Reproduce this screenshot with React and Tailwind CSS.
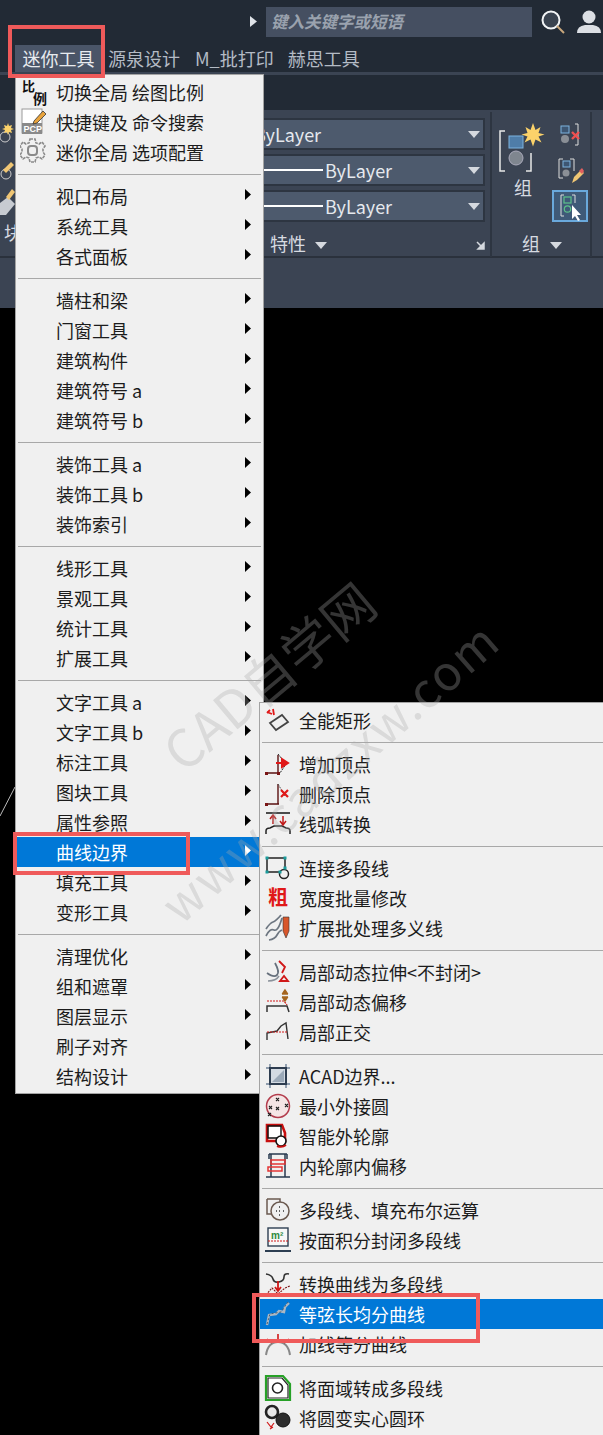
const font = { fontFamily: '"Noto Sans CJK SC", "Noto Sans", sans-serif' }

// one group of rows per block between the separators
const mainMenu = [
    [
        { label: '切换全局 绘图比例', icon: 'scale' },
        { label: '快捷键及 命令搜索', icon: 'pcp' },
        { label: '迷你全局 选项配置', icon: 'gear' },
    ],
    [{ label: '视口布局', sub: true }, { label: '系统工具', sub: true }, { label: '各式面板', sub: true }],
    [
        { label: '墙柱和梁', sub: true },
        { label: '门窗工具', sub: true },
        { label: '建筑构件', sub: true },
        { label: '建筑符号 a', sub: true },
        { label: '建筑符号 b', sub: true },
    ],
    [{ label: '装饰工具 a', sub: true }, { label: '装饰工具 b', sub: true }, { label: '装饰索引', sub: true }],
    [
        { label: '线形工具', sub: true },
        { label: '景观工具', sub: true },
        { label: '统计工具', sub: true },
        { label: '扩展工具', sub: true },
    ],
    [
        { label: '文字工具 a', sub: true },
        { label: '文字工具 b', sub: true },
        { label: '标注工具', sub: true },
        { label: '图块工具', sub: true },
        { label: '属性参照', sub: true },
        { label: '曲线边界', sub: true, active: true },
        { label: '填充工具', sub: true },
        { label: '变形工具', sub: true },
    ],
    [
        { label: '清理优化', sub: true },
        { label: '组和遮罩', sub: true },
        { label: '图层显示', sub: true },
        { label: '刷子对齐', sub: true },
        { label: '结构设计', sub: true },
    ],
]

const subMenu = [
    [{ label: '全能矩形', icon: 'rect' }],
    [
        { label: '增加顶点', icon: 'addVertex' },
        { label: '删除顶点', icon: 'delVertex' },
        { label: '线弧转换', icon: 'arc' },
    ],
    [
        { label: '连接多段线', icon: 'join' },
        { label: '宽度批量修改', icon: 'bold' },
        { label: '扩展批处理多义线', icon: 'pen' },
    ],
    [
        { label: '局部动态拉伸<不封闭>', icon: 'stretch' },
        { label: '局部动态偏移', icon: 'offset' },
        { label: '局部正交', icon: 'ortho' },
    ],
    [
        { label: 'ACAD边界...', icon: 'boundary' },
        { label: '最小外接圆', icon: 'circle' },
        { label: '智能外轮廓', icon: 'outline' },
        { label: '内轮廓内偏移', icon: 'inner' },
    ],
    [
        { label: '多段线、填充布尔运算', icon: 'bool' },
        { label: '按面积分封闭多段线', icon: 'area' },
    ],
    [
        { label: '转换曲线为多段线', icon: 'convert' },
        { label: '等弦长均分曲线', icon: 'chord', active: true },
        { label: '加线等分曲线', icon: 'divide' },
    ],
    [
        { label: '将面域转成多段线', icon: 'region' },
        { label: '将圆变实心圆环', icon: 'donut' },
    ],
]

const glyphs = {
    scale: (
        <>
            <text x="2" y="13" fontSize="13" fontWeight="700" fill="#111" style={font}>比</text>
            <text x="13" y="26" fontSize="14" fontWeight="700" fill="#111" style={font}>例</text>
        </>
    ),
    pcp: (
        <>
            <rect x="2" y="1" width="20" height="24" fill="#fff" stroke="#999" />
            <rect x="2" y="15" width="20" height="11" fill="#8a8a8a" />
            <text x="3.5" y="24" fontSize="9" fontWeight="700" fill="#fff" style={{ fontFamily: '"Liberation Sans", sans-serif' }}>PCP</text>
            <path d="M14 13l9-10 3 3-9 9-4 1z" fill="#e8a33c" stroke="#333" strokeWidth="0.8" />
        </>
    ),
    gear: (
        <>
            <path d="M10 2h5l1 4 3 1 3-2 3 4-2 3v3l2 3-3 4-3-2-3 1-1 4h-5l-1-4-3-1-3 2-3-4 2-3v-3l-2-3 3-4 3 2 3-1z" fill="none" stroke="#8a8a8a" strokeWidth="1.6" strokeDasharray="3 1" transform="translate(0 -1)" />
            <rect x="8" y="8" width="9" height="9" rx="3" fill="none" stroke="#8a8a8a" strokeWidth="2" />
        </>
    ),
    rect: (
        <>
            <path d="M6 17l12-8 6 7-12 8z" fill="none" stroke="#444" strokeWidth="1.8" />
            <path d="M3 6l5 2M9 3l1 6M3 7l3-3" stroke="#e01818" strokeWidth="1.8" fill="none" />
        </>
    ),
    addVertex: (
        <>
            <path d="M2 23h14M14 23V5" stroke="#5a1010" strokeWidth="1.4" fill="none" />
            <path d="M14 4l8 10-6 9" stroke="#222" strokeWidth="1" strokeDasharray="2 1" fill="none" />
            <path d="M12 13h10M18 9l6 4-6 4z" stroke="#e01818" strokeWidth="2" fill="#e01818" />
            <rect x="1" y="22" width="3" height="3" fill="#7a1515" />
            <rect x="13" y="22" width="3" height="3" fill="#7a1515" />
        </>
    ),
    delVertex: (
        <>
            <path d="M2 24h13M14 24V4" stroke="#5a1010" strokeWidth="1.4" fill="none" />
            <path d="M14 4l7 12" stroke="#555" strokeWidth="1" strokeDasharray="2 1" fill="none" />
            <path d="M17 10l7 7M24 10l-7 7" stroke="#e01818" strokeWidth="2.2" />
            <rect x="1" y="23" width="3" height="3" fill="#7a1515" />
        </>
    ),
    arc: (
        <>
            <path d="M2 3h24" stroke="#222" strokeWidth="1.6" />
            <path d="M2 24v-3q0-3 4-3l4-2h8l4 2q4 0 4 3v3" stroke="#222" strokeWidth="1.5" fill="none" />
            <path d="M9 14V6M6 9l3-4 3 4M19 6v8M16 11l3 4 3-4" stroke="#c01818" strokeWidth="1.5" fill="none" />
        </>
    ),
    join: (
        <>
            <path d="M3 4h18v10M3 4v14h12" stroke="#222" strokeWidth="1.5" fill="none" />
            <circle cx="20" cy="20" r="4.5" fill="none" stroke="#222" strokeWidth="1.5" />
            <rect x="1.5" y="2.5" width="3" height="3" fill="#1a9c9c" />
            <rect x="19.5" y="2.5" width="3" height="3" fill="#1a9c9c" />
            <rect x="1.5" y="16.5" width="3" height="3" fill="#1a9c9c" />
            <rect x="14.5" y="16.5" width="3" height="3" fill="#1a9c9c" />
            <rect x="19.5" y="12.5" width="3" height="3" fill="#1a9c9c" />
        </>
    ),
    bold: <text x="4" y="21" fontSize="20" fontWeight="700" fill="#e01818" style={font}>粗</text>,
    pen: (
        <>
            <path d="M2 22q4-8 8-6t8-12M2 15q4-6 7-7t8-7M5 26q6-1 8-5t5-5" stroke="#6d7681" strokeWidth="1.7" fill="none" />
            <path d="M19 3h6v14l-3 7-3-7z" fill="#d8562a" stroke="#333" strokeWidth="0.6" />
        </>
    ),
    stretch: (
        <>
            <path d="M3 15q7 5 10 2t-2-12" stroke="#66707c" strokeWidth="1.8" fill="none" />
            <path d="M4 23q8 0 11-5" stroke="#8b929b" strokeWidth="1.5" fill="none" />
            <path d="M15 3l6 6-3 6M16 23l4-5 4 5z" stroke="#d01818" strokeWidth="1.8" fill="none" />
        </>
    ),
    offset: (
        <>
            <path d="M3 24v-6h20l2 6" stroke="#333" strokeWidth="1.5" fill="none" />
            <path d="M3 13h17l3 4" stroke="#d01818" strokeWidth="1.2" strokeDasharray="2 1" fill="none" />
            <path d="M18 6h6M18 9h6M21 2l-2 3h4zM21 13l-2-3h4z" stroke="#a5651e" strokeWidth="1.5" fill="#a5651e" />
        </>
    ),
    ortho: (
        <>
            <path d="M3 22v-7l10-2 4-5 5-3 2 16" stroke="#333" strokeWidth="1.4" fill="none" />
            <path d="M3 14l20 0" stroke="#d01818" strokeWidth="1.1" strokeDasharray="2 1" fill="none" />
        </>
    ),
    boundary: (
        <>
            <path d="M6 2v24M22 2v24M2 6h24M2 22h24" stroke="#6e8097" strokeWidth="1.4" />
            <rect x="6" y="6" width="16" height="16" fill="#d3dae2" stroke="#2e3d50" strokeWidth="2" />
            <path d="M8 20L20 8v12z" fill="#9ba9b8" />
        </>
    ),
    circle: (
        <>
            <circle cx="14" cy="14" r="11.5" fill="#f5e5e5" stroke="#b33c4c" strokeWidth="1.5" />
            <path d="M12 6l3 3M15 6l-3 3M5 14l3 3M8 14l-3 3M12 15l3 3M15 15l-3 3M21 12l3 3M24 12l-3 3M4 21l3 3M7 21l-3 3" stroke="#222" strokeWidth="1.1" />
        </>
    ),
    outline: (
        <>
            <path d="M3 3h15l3 8v8H3z" fill="#fff" stroke="#c80f0f" strokeWidth="2.6" />
            <path d="M4 4h13v12H4z" fill="none" stroke="#111" strokeWidth="1.4" />
            <circle cx="17" cy="19" r="5" fill="#fff" stroke="#111" strokeWidth="1.6" />
            <path d="M13 24q5 2 9-1" stroke="#c80f0f" strokeWidth="2" fill="none" />
        </>
    ),
    inner: (
        <>
            <path d="M5 2h18M5 2v5M23 2v5M2 25h24M7 2v23M21 2v23" stroke="#27384e" strokeWidth="1.5" fill="none" />
            <rect x="7" y="8" width="14" height="4" fill="none" stroke="#e33434" strokeWidth="1.5" />
            <rect x="4" y="15" width="14" height="4" fill="none" stroke="#e33434" strokeWidth="1.5" />
        </>
    ),
    bool: (
        <>
            <path d="M3 3h13v4M3 3v15h6" stroke="#6b5a50" strokeWidth="1.5" fill="none" />
            <circle cx="16" cy="15" r="9" fill="#f0f0f0" stroke="#6b5a50" strokeWidth="1.5" />
            <path d="M12 15h1M15 11h1M15 15h1M15 19h1M19 15h1" stroke="#333" strokeWidth="1.5" />
        </>
    ),
    area: (
        <>
            <rect x="4" y="2" width="20" height="18" fill="#f7f7f7" stroke="#2d3e52" strokeWidth="1.4" />
            <text x="7" y="13" fontSize="10" fontWeight="700" fill="#2c8a3c" style={{ fontFamily: '"Liberation Sans", sans-serif' }}>m²</text>
            <path d="M4 15h20" stroke="#d01818" strokeDasharray="2 1" />
            <path d="M1 25h26" stroke="#2d3e52" strokeWidth="2" />
        </>
    ),
    convert: (
        <>
            <path d="M2 4q6 1 7 5t6 3 5-5 5-3" stroke="#333" strokeWidth="1.6" fill="none" />
            <path d="M14 11v9M11 17l3 4 3-4" stroke="#d01818" strokeWidth="1.8" fill="none" />
            <path d="M2 25l6-7 6 6 7-6 5-2" stroke="#7a1515" strokeWidth="1.1" strokeDasharray="2 1" fill="none" />
        </>
    ),
    chord: (
        <>
            <path d="M3 25l2-10 7-1 3-3 5 1 1-5 4-4" stroke="#a9b7c4" strokeWidth="2.4" fill="none" />
            <path d="M3 24l3-10 11-2 7-10" stroke="#4d6070" strokeWidth="1" strokeDasharray="2 2" fill="none" />
        </>
    ),
    divide: (
        <>
            <path d="M2 25q2-13 12-13t12 13" stroke="#888" strokeWidth="2" fill="none" />
            <path d="M3 9l5 4M25 9l-5 4M14 4v6" stroke="#d01818" strokeWidth="1.6" />
        </>
    ),
    region: (
        <>
            <path d="M2 2h17l7 8v16H2z" fill="#fff" stroke="#27a127" strokeWidth="2.2" />
            <path d="M4 4h14l6 7v13H4z" fill="none" stroke="#222" strokeWidth="1.2" />
            <circle cx="13.5" cy="14" r="5" fill="none" stroke="#222" strokeWidth="1.6" />
        </>
    ),
    donut: (
        <>
            <circle cx="8" cy="8" r="6" fill="#e8e8e8" stroke="#222" strokeWidth="2.6" />
            <circle cx="19" cy="16" r="7" fill="#2d2d2d" stroke="#111" strokeWidth="1" />
            <path d="M3 18l4 5 3-4M6 25l3-2" stroke="#d01818" strokeWidth="1.2" fill="none" />
        </>
    ),
}

const MenuIcon = ({ name }) => (
    <svg width="28" height="28" viewBox="0 0 28 28" className="shrink-0">
        {glyphs[name]}
    </svg>
)

const MenuRow = ({ item, textLeft, arrowRight }) => (
    <div
        className={`relative flex items-center h-[30px] text-[18px] leading-[30px] whitespace-nowrap ${item.active ? 'bg-[#0078d7] text-white' : 'text-[#1c1c1c]'}`}
        style={{ paddingLeft: textLeft }}
    >
        {item.icon && (
            <span className="absolute left-[4px] top-px">
                <MenuIcon name={item.icon} />
            </span>
        )}
        <span>{item.label}</span>
        {item.sub && (
            <svg width="6" height="11" viewBox="0 0 6 11" className="absolute top-[8px]" style={{ right: arrowRight }}>
                <path d="M0 0l6 5.5L0 11z" fill={item.active ? '#fff' : '#000'} />
            </svg>
        )}
    </div>
)

const Menu = ({ groups, textLeft, arrowRight, className }) => (
    <div className={`absolute bg-[#f0f0f0] border border-[#a3a3a3] pt-[2px] pb-[2px] ${className}`}>
        {groups.map((group, i) => (
            <div key={i}>
                {i > 0 && (
                    <div className="h-[14px] flex items-center px-[2px]">
                        <div className="h-[1px] w-full bg-[#a8a8a8]" />
                    </div>
                )}
                {group.map((item) => (
                    <MenuRow key={item.label} item={item} textLeft={textLeft} arrowRight={arrowRight} />
                ))}
            </div>
        ))}
    </div>
)

const Combo = ({ line, label }) => (
    <div className="flex items-center h-[32px] bg-[#4d5a6d] border-2 border-[#2d3541] relative text-[18px] text-[#e6e9ee]">
        {line && <div className="ml-[62px] w-[59px] h-[2px] bg-white" />}
        <span className={line ? 'ml-[2px]' : 'ml-[52px]'}>{label}</span>
        <svg width="12" height="7" viewBox="0 0 12 7" className="absolute right-[3px] top-[11px]">
            <path d="M0 0h12L6 7z" fill="#d5d9df" />
        </svg>
    </div>
)

const GroupPanel = () => (
    <div className="w-[102px] h-[145px] relative border-l-2 border-r-2 border-[#2d3541] ml-[5px] text-[#d7dbe1] text-[18px] mt-[2px]">
        <svg width="50" height="50" viewBox="0 0 50 50" className="absolute left-[7px] top-[11px]">
            <path d="M6 8H1v40h5M32 30v18h-5" stroke="#e8e8e8" strokeWidth="1.5" fill="none" />
            <rect x="10" y="13" width="14" height="12" fill="#4f7da8" stroke="#7db3e0" />
            <circle cx="17" cy="35" r="7" fill="#7f868f" stroke="#aab" />
            <path d="M34 0l2.5 7 5-3-2 6 6 1.5-6 2 3 6-6-3-2.5 7-2.5-7-6 3 3-6-6-2 6-1.5-2-6 5 3z" fill="#fbd26a" />
        </svg>
        <span className="absolute left-[22px] top-[62px]">组</span>
        <svg width="20" height="24" viewBox="0 0 20 24" className="absolute left-[68px] top-[11px]">
            <path d="M15 1h3v21h-3" stroke="#ddd" fill="none" />
            <rect x="1" y="3" width="8" height="7" fill="#3d5672" stroke="#7db3e0" />
            <circle cx="5" cy="16" r="4" fill="#8a8f96" />
            <path d="M12 9l7 7M19 9l-7 7" stroke="#ef5050" strokeWidth="2.4" />
        </svg>
        <svg width="26" height="26" viewBox="0 0 26 26" className="absolute left-[66px] top-[46px]">
            <path d="M5 1H1v19h4M12 1h4v12" stroke="#ddd" fill="none" />
            <rect x="5" y="3" width="7" height="6" fill="#3d5672" stroke="#7db3e0" />
            <circle cx="8" cy="15" r="3.5" fill="#8a8f96" />
            <path d="M14 25l2-6 7-7 3 3-7 7z" fill="#f0c674" />
            <path d="M21 13l3-3 2 3-2 3z" fill="#e26060" />
        </svg>
        <div className="absolute left-[60px] top-[78px] w-[36px] h-[32px] bg-[#3f5a78] border-2 border-[#6aa9dc]">
            <svg width="30" height="28" viewBox="0 0 30 28" className="absolute left-[6px] top-[1px]">
                <path d="M4 2H1v21h3M12 2h3v8" stroke="#ddd" fill="none" />
                <rect x="4" y="4" width="7" height="6" fill="none" stroke="#5cc28a" strokeWidth="1.2" />
                <circle cx="7.5" cy="16" r="3.2" fill="none" stroke="#5cc28a" strokeWidth="1.2" />
                <path d="M12 12v14l3-3 3 5 2-1-3-5h4z" fill="#fff" />
            </svg>
        </div>
        <span className="absolute left-[30px] top-[118px]">组</span>
        <svg width="12" height="7" viewBox="0 0 12 7" className="absolute left-[58px] top-[130px]">
            <path d="M0 0h12L6 7z" fill="#d5d9df" />
        </svg>
    </div>
)

export default function App() {
    return (
        <div className="relative w-[603px] h-[1435px] overflow-hidden bg-black" style={font}>
            {/* title bar */}
            <div className="h-[72px] bg-[#222a35] flex flex-col">
                <div className="h-[42px] flex items-center pl-[250px] pt-[1px]">
                    <svg width="7" height="11" viewBox="0 0 7 11">
                        <path d="M0 0l7 5.5L0 11z" fill="#dfe3e8" />
                    </svg>
                    <div className="ml-[9px] w-[266px] h-[30px] bg-[#454f61] flex items-center pl-[5px] text-[16.5px] italic font-bold text-[#9aa2ae]">
                        键入关键字或短语
                    </div>
                    <svg width="24" height="24" viewBox="0 0 24 24" className="ml-[9px]">
                        <circle cx="10" cy="10" r="8.5" fill="#3a4350" stroke="#f2f4f6" strokeWidth="2" />
                        <path d="M16 16l7 7" stroke="#c9a77c" strokeWidth="2" />
                    </svg>
                    <svg width="24" height="24" viewBox="0 0 24 24" className="ml-[12px]">
                        <circle cx="12" cy="7" r="6.5" fill="#dcdfe4" />
                        <path d="M0 23q0-7 8-8h8q8 1 8 8z" fill="#dcdfe4" />
                    </svg>
                </div>
                <div className="flex items-end text-[18px] pl-[15px] text-[#b4bbc5] leading-[27px] mt-[3px]">
                    <span className="w-[87px] h-[27px] bg-[#4a5568] text-center text-[#e8ebef]">迷你工具</span>
                    <span className="ml-[6px]">源泉设计</span>
                    <span className="ml-[15px]">M_批打印</span>
                    <span className="ml-[14px]">赫思工具</span>
                </div>
            </div>
            <div className="h-[3px] bg-[#3b4453]" />
            <div className="h-[35px] bg-[#222a35]" />

            {/* ribbon */}
            <div className="h-[148px] bg-[#3b4453] flex border-b-2 border-[#2a313c]">
                <div className="w-[15px] shrink-0 flex flex-col pt-[12px] overflow-hidden">
                    <svg width="15" height="24" viewBox="0 0 15 24">
                        <circle cx="5" cy="15" r="5" fill="none" stroke="#ccc" />
                        <path d="M8 1l1 3 3-1-1 3 3 1-3 1 1 3-3-1-1 3-1-3-3 1 1-3-3-1 3-1-1-3 3 1z" fill="#fbd26a" />
                    </svg>
                    <svg width="15" height="22" viewBox="0 0 15 22" className="mt-[14px]">
                        <circle cx="6" cy="14" r="5" fill="none" stroke="#ccc" />
                        <path d="M3 10l8-8 3 3-8 8z" fill="#f0c674" />
                    </svg>
                    <svg width="15" height="30" viewBox="0 0 15 30" className="mt-[5px]">
                        <path d="M0 16l8-6 7 7-9 11H0z" fill="#c7cbd1" />
                        <path d="M6 10l6-8 3 3-6 8z" fill="#f0c674" />
                    </svg>
                    <span className="text-[18px] leading-[20px] text-[#d7dbe1] mt-[5px] ml-[4px]">块</span>
                </div>
                <div className="w-[285px] ml-[185px] shrink-0 pt-[8px] flex flex-col gap-[4px]">
                    <Combo label="ByLayer" />
                    <Combo line label="ByLayer" />
                    <Combo line label="ByLayer" />
                    <div className="relative h-[30px] text-[18px] text-[#d7dbe1]">
                        <span className="absolute left-[70px] top-[4px]">特性</span>
                        <svg width="12" height="7" viewBox="0 0 12 7" className="absolute left-[115px] top-[16px]">
                            <path d="M0 0h12L6 7z" fill="#d5d9df" />
                        </svg>
                        <svg width="9" height="9" viewBox="0 0 9 9" className="absolute right-[0px] top-[15px]">
                            <path d="M1 1l6 6M8 2v6H2z" stroke="#d5d9df" strokeWidth="1.5" fill="#d5d9df" />
                        </svg>
                    </div>
                </div>
                <GroupPanel />
            </div>
            <div className="h-[50px] bg-[#3b4453]" />

            {/* white line of the drawing, cut off by the menu */}
            <svg width="15" height="30" viewBox="0 0 15 30" className="absolute left-0 top-[787px]">
                <path d="M0 29L15 0" stroke="#bbb" strokeWidth="1" />
            </svg>

            <Menu groups={mainMenu} textLeft="40px" arrowRight="12px" className="left-[15px] top-[74px] w-[249px] z-10" />
            <Menu groups={subMenu} textLeft="39px" arrowRight="12px" className="left-[259px] top-[702px] w-[350px] z-20" />

            {/* red highlight frames */}
            <div className="absolute left-[8px] top-[25px] w-[97px] h-[53px] border-[4px] border-[#ef5a5a] z-30" />
            <div className="absolute left-[13px] top-[832px] w-[177px] h-[43px] border-[4px] border-[#ef5a5a] z-30" />
            <div className="absolute left-[252px] top-[1293px] w-[228px] h-[50px] border-[4px] border-[#ef5a5a] z-30" />

            {/* watermark */}
            <div className="absolute left-[118px] top-[645px] w-[300px] text-center text-[52px] leading-[60px] text-[#aaaaaa50] rotate-[-40deg] whitespace-nowrap z-40">
                CAD自学网
            </div>
            <div className="absolute left-[118px] top-[752px] w-[400px] text-center text-[48px] leading-[54px] tracking-[2px] text-[#aaaaaa50] rotate-[-41deg] whitespace-nowrap z-40">
                www.cadzxw.com
            </div>
        </div>
    )
}
